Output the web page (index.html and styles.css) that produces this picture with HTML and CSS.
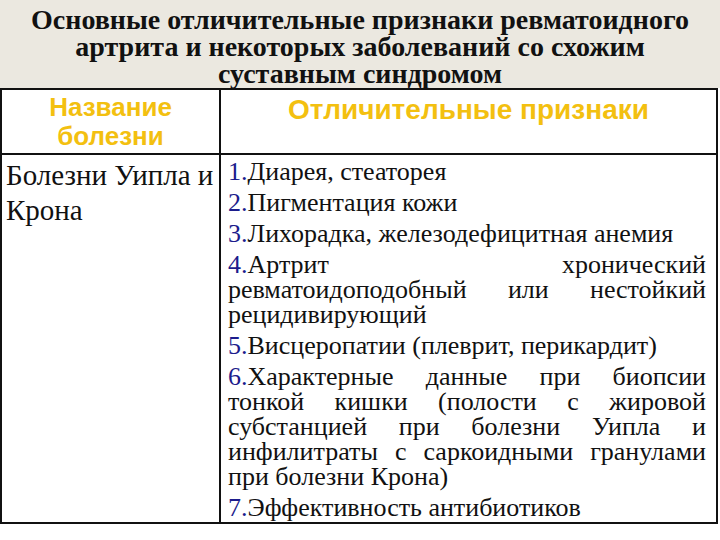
FILE: index.html
```html
<!DOCTYPE html>
<html lang="ru">
<head>
<meta charset="utf-8">
<link rel="stylesheet" href="styles.css">
</head>
<body>
<div class="slide">
  <h1 class="title">Основные отличительные признаки ревматоидного<br>артрита и некоторых заболеваний со схожим<br>суставным синдромом</h1>
  <table class="grid">
    <thead>
      <tr>
        <th class="col-name">Название<br>болезни</th>
        <th class="col-signs">Отличительные признаки</th>
      </tr>
    </thead>
    <tbody>
      <tr>
        <td class="name">Болезни Уипла и Крона</td>
        <td class="signs">
          <p><span class="num">1.</span>Диарея, стеаторея</p>
          <p><span class="num">2.</span>Пигментация кожи</p>
          <p><span class="num">3.</span>Лихорадка, железодефицитная анемия</p>
          <p><span class="num">4.</span>Артрит хронический ревматоидоподобный или нестойкий рецидивирующий</p>
          <p><span class="num">5.</span>Висцеропатии (плеврит, перикардит)</p>
          <p><span class="num">6.</span>Характерные данные при биопсии тонкой кишки (полости с жировой субстанцией при болезни Уипла и инфилитраты с саркоидными гранулами при болезни Крона)</p>
          <p><span class="num">7.</span>Эффективность антибиотиков</p>
        </td>
      </tr>
    </tbody>
  </table>
</div>
</body>
</html>
```
FILE: styles.css
```css
html, body {
  margin: 0;
  padding: 0;
  background: #ffffff;
}
.slide {
  width: 720px;
  height: 540px;
  background: #ffffff;
  overflow: hidden;
}
.title {
  margin: 0;
  height: 88px;
  box-sizing: border-box;
  padding-top: 6px;
  background: #ebe8e0;
  font-family: "Liberation Serif", "Times New Roman", serif;
  font-weight: bold;
  font-size: 28px;
  line-height: 27px;
  text-align: center;
  color: #111;
  white-space: nowrap;
  overflow: hidden;
}
.grid {
  width: 718px;
  border-collapse: collapse;
  border: 2px solid #111;
  table-layout: fixed;
}
.grid th, .grid td {
  border: 2px solid #111;
  vertical-align: top;
}
.col-name { width: 219px; }
.grid th {
  height: 65px;
  box-sizing: border-box;
  padding: 0;
  font-family: "Liberation Sans", Arial, sans-serif;
  font-weight: bold;
  line-height: 29px;
  color: #f3c010;
  text-align: center;
}
.grid th.col-name {
  font-size: 26px;
  padding-top: 3px;
}
.grid th.col-signs {
  font-size: 28px;
  padding-top: 5px;
}
.name {
  font-family: "Liberation Serif", "Times New Roman", serif;
  font-size: 29px;
  line-height: 35px;
  padding: 3px 4px 0 4px;
  color: #111;
}
.signs {
  font-family: "Liberation Serif", "Times New Roman", serif;
  font-size: 26px;
  line-height: 25px;
  padding: 4px 10px 2px 7px;
  color: #111;
  height: 366px;
  box-sizing: border-box;
}
.signs p {
  margin: 0 0 6px 0;
  text-align: justify;
}
.signs p:last-child { margin-bottom: 0; }
.num { color: #1c1c8c; }
```
